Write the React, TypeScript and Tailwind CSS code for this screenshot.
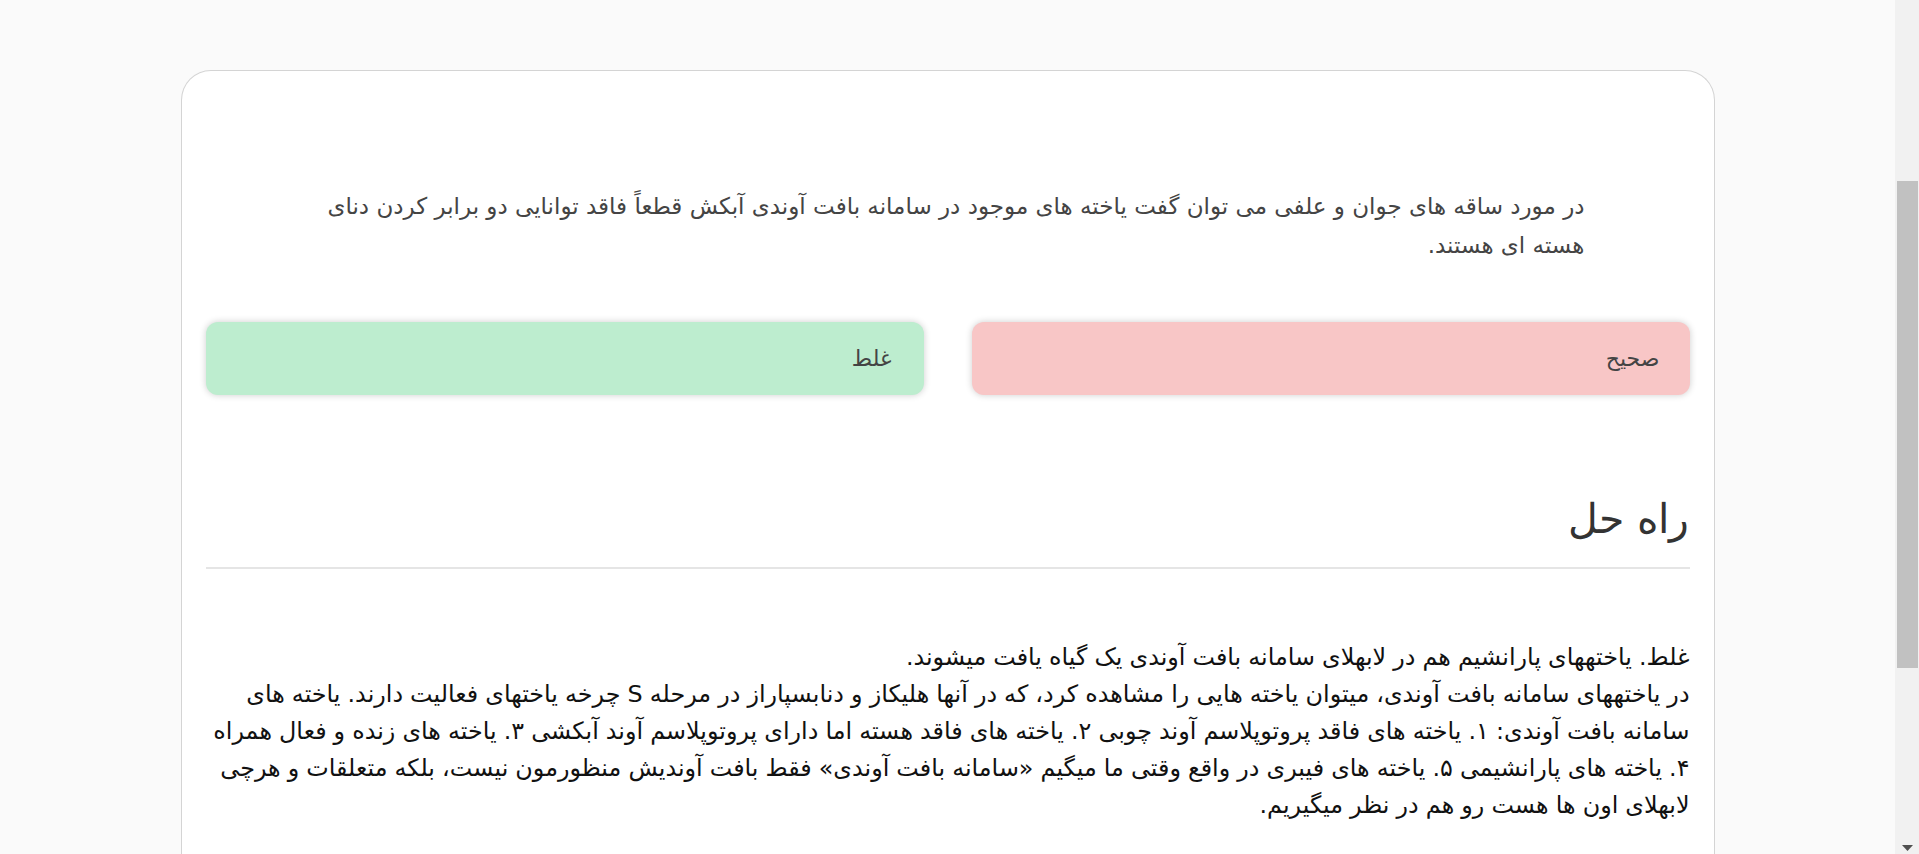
function FakeScrollbar() {
  return (
    <div className="relative h-full w-[24px] shrink-0 bg-[#f1f1f1]">
      <div className="absolute top-[181px] right-[1px] left-[2px] h-[487px] bg-[#c1c1c1]" />
      <svg className="absolute bottom-[3px] left-[7px]" width="11" height="6" viewBox="0 0 11 6">
        <path d="M0 0 L11 0 L5.5 6 Z" fill="#505050" />
      </svg>
    </div>
  );
}

export default function App() {
  return (
    <div className="flex h-[854px] overflow-hidden bg-[#fafafa]">
      <div
        dir="rtl"
        className="min-w-0 flex-1 overflow-hidden pt-[70px]"
        style={{ fontFamily: '"DejaVu Sans", sans-serif' }}
      >
        <div className="mx-auto w-[1534px] rounded-t-[30px] border border-b-0 border-[#d4d4d4] bg-white px-[24px] pt-[116px] pb-[80px]">
          <p className="mx-[105px] text-[23px] leading-[39px] text-[#444]">
            در مورد ساقه های جوان و علفی می توان گفت یاخته های موجود در سامانه بافت آوندی آبکش قطعاً فاقد توانایی دو برابر کردن دنای هسته ای هستند.
          </p>

          <div className="mt-[57px] grid grid-cols-2 gap-[48px]">
            <button
              type="button"
              className="h-[73px] rounded-[12px] bg-[#f8c6c6] pr-[30px] text-right text-[22px] text-[#444] shadow-[0_0_7px_rgba(0,0,0,0.2)]"
            >
              صحيح
            </button>
            <button
              type="button"
              className="h-[73px] rounded-[12px] bg-[#bdedcf] pr-[32px] text-right text-[22px] text-[#444] shadow-[0_0_7px_rgba(0,0,0,0.2)]"
            >
              غلط
            </button>
          </div>

          <h2 className="mt-[96px] text-[41px] font-light leading-[56px] text-[#333]">راه حل</h2>
          <div className="mt-[20px] h-[2px] bg-[#e5e5e5]" />

          <p className="mt-[70px] text-[23.85px] leading-[37px] text-[#111] [word-spacing:-0.5px]">
            غلط. یاختههای پارانشیم هم در لابهلای سامانه بافت آوندی یک گیاه یافت میشوند.
            <br />
            در یاختههای سامانه بافت آوندی، میتوان یاخته هایی را مشاهده کرد، که در آنها هلیکاز و دنابسپاراز در مرحله S چرخه یاختهای فعالیت دارند. یاخته های سامانه بافت آوندی: ۱. یاخته های فاقد پروتوپلاسم آوند چوبی ۲. یاخته های فاقد هسته اما دارای پروتوپلاسم آوند آبکشی ۳. یاخته های زنده و فعال همراه ۴. یاخته های پارانشیمی ۵. یاخته های فیبری در واقع وقتی ما میگیم «سامانه بافت آوندی» فقط بافت آوندیش منظورمون نیست، بلکه متعلقات و هرچی لابهلای اون ها هست رو هم در نظر میگیریم.
          </p>
        </div>
      </div>
      <FakeScrollbar />
    </div>
  );
}
